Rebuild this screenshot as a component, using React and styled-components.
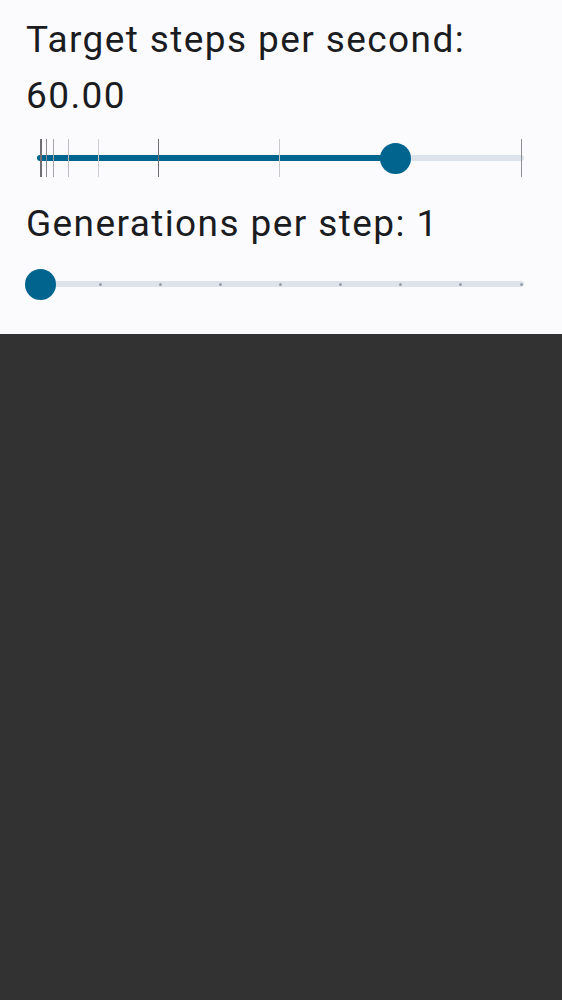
import React from 'react';
import styled, { createGlobalStyle } from 'styled-components';

const GlobalStyle = createGlobalStyle`
  html, body {
    margin: 0;
    padding: 0;
    background: #323232;
  }
  body {
    font-family: Roboto, "Noto Sans", sans-serif;
  }
`;

// log-scale marks on the speed slider, as fraction of the track
const speedTicks = [
  { at: 0.0, shade: '#6f6f73' },
  { at: 0.004, shade: '#6f6f73' },
  { at: 0.013, shade: '#8a8a8e' },
  { at: 0.0275, shade: '#a4a4a8' },
  { at: 0.0585, shade: '#bdbdc1' },
  { at: 0.122, shade: '#cfcfd3' },
  { at: 0.247, shade: '#6f6f73' },
  { at: 0.498, shade: '#cacace' },
  { at: 1.0, shade: '#8f8f93' }
];

const Slider = ({ value, ticks = [], steps = 0, space }) => (
  <SliderBox $space={space}>
    <Rail>
      <Track />
      {value > 0 && <Fill style={{ width: `calc(${value * 100}% + 3px)` }} />}
      {steps > 0 && (
        <DotRow>
          {Array.from({ length: steps + 1 }, (_, i) => <Dot key={i} $off={i === 0} />)}
        </DotRow>
      )}
      {ticks.map((t) => <Tick key={t.at} $color={t.shade} style={{ left: `${t.at * 100}%` }} />)}
      <Thumb style={{ left: `${value * 100}%` }} />
    </Rail>
  </SliderBox>
);

const App = () => (
  <>
    <GlobalStyle />
    <Panel>
      <Label>Target steps per second:<br />60.00</Label>
      <Slider value={0.74} ticks={speedTicks} space={10} />
      <Label $second>Generations per step: 1</Label>
      <Slider value={0} steps={8} space={8} />
    </Panel>
  </>
);

export default App;

const Panel = styled.div`
  background: #fbfbfe;
  padding: 12px 0 18px;
  display: flex;
  flex-direction: column;
`;

const Label = styled.div`
  margin: ${(p) => (p.$second ? '4px' : '0')} 0 0 26px;
  font-size: 37px;
  line-height: 56px;
  letter-spacing: 1.4px;
  color: #1b1c1f;
`;

const SliderBox = styled.div`
  height: 48px;
  margin: ${(p) => p.$space}px 0;
  padding: 0 41px 0 40px;
  display: flex;
  align-items: center;
`;

const Rail = styled.div`
  position: relative;
  flex: 1;
  height: 6px;
`;

const Track = styled.div`
  position: absolute;
  inset: 0 -3px;
  border-radius: 3px;
  background: #dde3ea;
`;

const Fill = styled.div`
  position: absolute;
  left: -3px;
  top: 0;
  bottom: 0;
  border-radius: 3px;
  background: #00658e;
`;

const DotRow = styled.div`
  position: absolute;
  inset: 0 -1.5px;
  display: flex;
  align-items: center;
  justify-content: space-between;
`;

const Dot = styled.span`
  width: 3px;
  height: 3px;
  border-radius: 50%;
  background: #9aa3ad;
  visibility: ${(p) => (p.$off ? 'hidden' : 'visible')};
`;

const Tick = styled.div`
  position: absolute;
  top: -16px;
  width: 1px;
  height: 38px;
  margin-left: -0.5px;
  background: ${(p) => p.$color};
`;

const Thumb = styled.div`
  position: absolute;
  top: 50%;
  width: 31px;
  height: 31px;
  margin: -15.5px 0 0 -15.5px;
  border-radius: 50%;
  background: #00658e;
`;
